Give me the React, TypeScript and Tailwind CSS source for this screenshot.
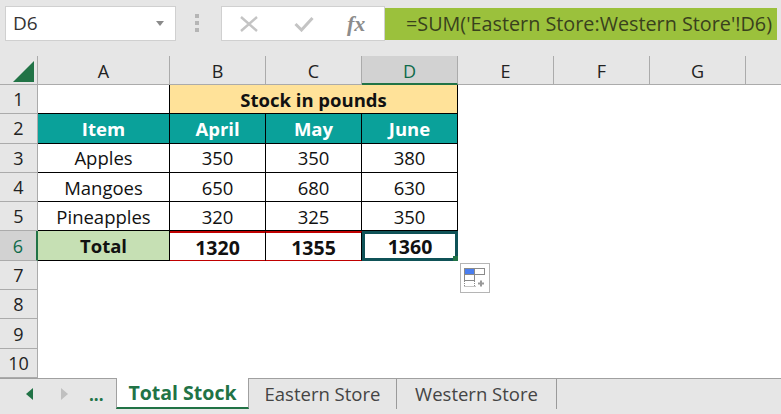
const FONT = "font-['Open_Sans','Noto_Sans',sans-serif]";

const COLS = ["A", "B", "C", "D", "E", "F", "G"];

const HEAD = ["Item", "April", "May", "June"];
const BODY = [
  ["Apples", "350", "350", "380"],
  ["Mangoes", "650", "680", "630"],
  ["Pineapples", "320", "325", "350"],
];

function ColHeader({ label }: { label: string }) {
  const active = label === "D";
  return (
    <div
      className={`flex items-center justify-center border-r border-b border-[#ababab] pt-[3px] text-[18px] ${
        active ? "border-b-2 border-b-[#217346] bg-[#d2d2d2] text-[#0f6b4a]" : "bg-[#e6e6e6] text-[#222]"
      }`}
    >
      {label}
    </div>
  );
}

function RowHeader({ n }: { n: number }) {
  const active = n === 6;
  return (
    <div
      className={`flex items-center justify-center border-r border-b border-[#ababab] pt-px text-[18px] ${
        active ? "border-r-2 border-r-[#217346] bg-[#d2d2d2] text-[#0f6b4a]" : "bg-[#e6e6e6] text-[#222]"
      }`}
    >
      {n}
    </div>
  );
}

function Cell({ children, className = "" }: { children?: React.ReactNode; className?: string }) {
  return (
    <div className={`flex items-center justify-center border-r border-b border-black pt-px text-[18.5px] ${className}`}>
      {children}
    </div>
  );
}

function Blank({ count }: { count: number }) {
  return (
    <>
      {Array.from({ length: count }, (_, i) => (
        <div key={i} />
      ))}
    </>
  );
}

function PasteOptions() {
  return (
    <div className="absolute left-[460px] top-[263px] flex h-[30px] w-[30px] items-center justify-center border border-[#b5b5b5] bg-white">
      <svg width="22" height="20" viewBox="0 0 22 20">
        <rect x="0.5" y="0.5" width="10" height="6" fill="#4a7ef0" stroke="#8a8a8a" />
        <rect x="10.5" y="0.5" width="10" height="6" fill="#fff" stroke="#8a8a8a" />
        <rect x="0.5" y="6.5" width="10" height="6" fill="#fff" stroke="#8a8a8a" />
        <path d="M0.5 18.5h11" stroke="#8a8a8a" strokeDasharray="1 1" />
        <path d="M0.5 13v5.5M10.5 13v5.5" stroke="#8a8a8a" strokeDasharray="1 1" />
        <path d="M14 15.5h6M17 12.5v6" stroke="#999" strokeWidth="2" />
      </svg>
    </div>
  );
}

function Tab({ label, className = "" }: { label: string; className?: string }) {
  return (
    <div className={`flex h-[30px] items-center justify-center border-r border-[#9a9a9a] text-[18.5px] text-[#444] ${className}`}>
      {label}
    </div>
  );
}

export default function App() {
  return (
    <div className={`relative flex h-[414px] w-[781px] flex-col overflow-hidden bg-white ${FONT}`}>
      {/* formula bar */}
      <div className="flex h-[56px] shrink-0 items-start bg-[#e6e6e6] pl-[5px] pt-[6px]">
        <div className="flex h-[35px] w-[171px] items-center justify-between border border-[#d0d0d0] bg-white pl-[7px] pr-[11px] text-[19px] text-[#333]">
          D6
          <svg width="8" height="5" viewBox="0 0 8 5">
            <path d="M0 0h8L4 5z" fill="#8a8a8a" />
          </svg>
        </div>
        <div className="ml-[19px] mt-[8px] flex flex-col gap-[3px]">
          <div className="h-[4px] w-[4px] bg-[#b5b5b5]" />
          <div className="h-[4px] w-[4px] bg-[#b5b5b5]" />
          <div className="h-[4px] w-[4px] bg-[#b5b5b5]" />
        </div>
        <div className="ml-[22px] flex h-[35px] w-[164px] items-center border border-[#d0d0d0] bg-white">
          <svg className="ml-[18px]" width="18" height="16" viewBox="0 0 18 16">
            <path d="M1 1l16 14M17 1L1 15" stroke="#c4c4c4" strokeWidth="2.4" />
          </svg>
          <svg className="ml-[36px]" width="20" height="16" viewBox="0 0 20 16">
            <path d="M1.5 8l6 6L18.5 2" fill="none" stroke="#c4c4c4" strokeWidth="3" />
          </svg>
          <span className="ml-[33px] font-['Liberation_Serif',serif] text-[22px] font-bold italic leading-none text-[#8c8c8c]">fx</span>
        </div>
        <div className="mt-[2px] flex h-[32px] w-[392px] items-center bg-[#9bc13c] pl-[21px] text-[19.8px] whitespace-nowrap text-[#39411d]">
          =SUM('Eastern Store:Western Store'!D6)
        </div>
      </div>

      {/* sheet */}
      <div className="grid flex-1 grid-cols-[38px_132px_96px_96px_96px_96px_96px_96px_35px] grid-rows-[29px_repeat(10,29.3px)] content-start">
        <div className="flex items-end justify-end border-r border-b border-[#ababab] bg-[#e6e6e6] pb-[2px] pr-[3px]">
          <svg width="21" height="21" viewBox="0 0 21 21">
            <path d="M21 0v21H0z" fill="#217346" />
          </svg>
        </div>
        {COLS.map((c) => (
          <ColHeader key={c} label={c} />
        ))}
        <div className="border-b border-[#ababab] bg-[#e6e6e6]" />

        <RowHeader n={1} />
        <div className="border-r border-b border-black" />
        <Cell className="col-span-3 bg-[#ffe299] font-bold text-[#111]">Stock in pounds</Cell>
        <Blank count={4} />

        <RowHeader n={2} />
        {HEAD.map((h) => (
          <Cell key={h} className="bg-[#0aa19a] font-bold text-white">
            {h}
          </Cell>
        ))}
        <Blank count={4} />

        {BODY.map((row, r) => (
          <div key={row[0]} className="contents">
            <RowHeader n={r + 3} />
            {row.map((v, c) => (
              <Cell key={c} className="text-[#111]">
                {v}
              </Cell>
            ))}
            <Blank count={4} />
          </div>
        ))}

        <RowHeader n={6} />
        <Cell className="bg-[#c6e0b4] font-bold text-[#111]">Total</Cell>
        <Cell className="border-y-2 border-y-[#c00000] text-[19.5px] font-bold text-[#111]">1320</Cell>
        <Cell className="border-y-2 border-y-[#c00000] text-[19.5px] font-bold text-[#111]">1355</Cell>
        <div className="relative flex items-center justify-center border-[3px] border-[#0f5257] text-[19.5px] font-bold text-[#111]">
          1360
          <div className="absolute -bottom-[3px] -right-[3px] h-[5px] w-[5px] bg-[#217346]" />
        </div>
        <Blank count={4} />

        {[7, 8, 9, 10].map((n) => (
          <div key={n} className="contents">
            <RowHeader n={n} />
            <Blank count={8} />
          </div>
        ))}
      </div>

      <PasteOptions />

      {/* sheet tabs */}
      <div className="flex h-[36px] shrink-0 items-start border-t border-[#a0a0a0] bg-[#e6e6e6]">
        <div className="flex h-[30px] w-[116px] items-center">
          <svg className="ml-[26px]" width="7" height="12" viewBox="0 0 7 12">
            <path d="M7 0v12L0 6z" fill="#217346" />
          </svg>
          <svg className="ml-[28px]" width="7" height="12" viewBox="0 0 7 12">
            <path d="M0 0v12l7-6z" fill="#c0c0c0" />
          </svg>
          <span className="ml-[21px] text-[17px] font-bold leading-none text-[#217346]">...</span>
        </div>
        <div className="-mt-px flex h-[31px] w-[133px] items-center justify-center border-x border-[#a0a0a0] border-b-2 border-b-[#217346] bg-white text-[19.5px] font-bold text-[#217346]">
          Total Stock
        </div>
        <Tab label="Eastern Store" className="w-[148px]" />
        <Tab label="Western Store" className="w-[160px]" />
      </div>
    </div>
  );
}
